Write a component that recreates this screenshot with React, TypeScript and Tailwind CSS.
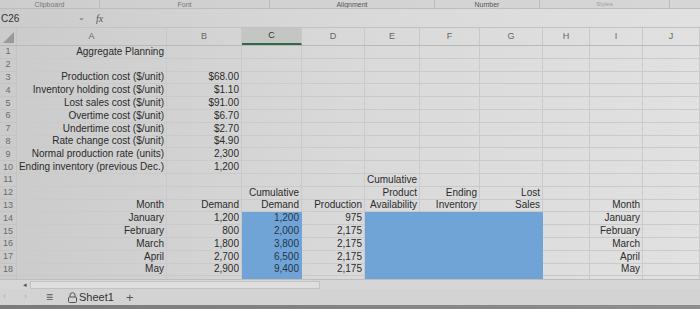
import React from "react";

type Cell = { t?: string; blue?: boolean; align?: "r" | "c" | "l" };

const COLS = "grid-cols-[17px_150px_75px_60px_63px_55px_60px_63px_47px_53px_57px]";

const e: Cell = {};
const r = (t: string): Cell => ({ t, align: "r" });
const b = (t?: string): Cell => ({ t, blue: true, align: "r" });

const rows: Cell[][] = [
  [r("Aggregate Planning"), e, e, e, e, e, e, e, e, e],
  [e, e, e, e, e, e, e, e, e, e],
  [r("Production cost ($/unit)"), r("$68.00"), e, e, e, e, e, e, e, e],
  [r("Inventory holding cost ($/unit)"), r("$1.10"), e, e, e, e, e, e, e, e],
  [r("Lost sales cost ($/unit)"), r("$91.00"), e, e, e, e, e, e, e, e],
  [r("Overtime cost ($/unit)"), r("$6.70"), e, e, e, e, e, e, e, e],
  [r("Undertime cost ($/unit)"), r("$2.70"), e, e, e, e, e, e, e, e],
  [r("Rate change cost ($/unit)"), r("$4.90"), e, e, e, e, e, e, e, e],
  [r("Normal production rate (units)"), r("2,300"), e, e, e, e, e, e, e, e],
  [r("Ending inventory (previous Dec.)"), r("1,200"), e, e, e, e, e, e, e, e],
  [e, e, e, e, r("Cumulative"), e, e, e, e, e],
  [e, e, r("Cumulative"), e, r("Product"), r("Ending"), r("Lost"), e, e, e],
  [r("Month"), r("Demand"), r("Demand"), r("Production"), r("Availability"), r("Inventory"), r("Sales"), e, r("Month"), e],
  [r("January"), r("1,200"), b("1,200"), r("975"), b(), b(), b(), e, r("January"), e],
  [r("February"), r("800"), b("2,000"), r("2,175"), b(), b(), b(), e, r("February"), e],
  [r("March"), r("1,800"), b("3,800"), r("2,175"), b(), b(), b(), e, r("March"), e],
  [r("April"), r("2,700"), b("6,500"), r("2,175"), b(), b(), b(), e, r("April"), e],
  [r("May"), r("2,900"), b("9,400"), r("2,175"), b(), b(), b(), e, r("May"), e],
  [e, e, b(), e, b(), b(), b(), e, e, e],
];

const letters = ["A", "B", "C", "D", "E", "F", "G", "H", "I", "J"];

export default function App() {
  return (
    <div
      className="w-[700px] h-[309px] overflow-hidden flex flex-col bg-gradient-to-r from-[#cbcbcb] via-[#d9d9d9] to-[#e1e1e1] text-[#2b2b2b]"
      style={{ fontFamily: '"Liberation Sans", Arial, sans-serif' }}
    >
      {/* ribbon group labels */}
      <div className="h-[9px] flex items-start text-[7px] text-[#555] leading-none overflow-hidden border-b border-[#bdbdbd] bg-[#cfcfcf]/60">
        <div className="w-[100px] h-full flex items-start justify-center pt-[1px] text-[#777] border-r border-[#bcbcbc]">Clipboard</div>
        <div className="w-[170px] h-full flex items-start justify-center pt-[1px] text-[#777] border-r border-[#bcbcbc]">Font</div>
        <div className="w-[165px] h-full flex items-start justify-center pt-[1px] border-r border-[#bcbcbc]">Alignment</div>
        <div className="w-[105px] h-full flex items-start justify-center pt-[1px] border-r border-[#bcbcbc]">Number</div>
        <div className="w-[130px] h-full flex items-start justify-center pt-[1px] text-[#a0a0a0] text-[6px] border-r border-[#bcbcbc]">Styles</div>
      </div>

      {/* formula bar */}
      <div className="h-[19px] flex items-center border-b border-[#c2c2c2] text-[10px]">
        <div className="w-[78px] pl-[1px] text-[#333]">C26</div>
        <div className="w-[18px] text-[8px] text-[#666] leading-none">⌄</div>
        <div className="w-[20px] text-[#555] italic text-[10px]" style={{ fontFamily: '"Liberation Serif", serif' }}>
          fx
        </div>
        <div className="flex-1 h-full border-l border-[#cfcfcf]" />
      </div>

      {/* column headers */}
      <div className={`grid ${COLS} h-[18px] border-b border-[#b9b9b9] text-[9px] text-[#666]`}>
        <div className="relative border-r border-[#c4c4c4]">
          <svg className="absolute right-[2px] bottom-[2px]" width="11" height="11" viewBox="0 0 11 11">
            <polygon points="11,0 11,11 0,11" fill="#9a9a9a" />
          </svg>
        </div>
        {letters.map((l) => (
          <div
            key={l}
            className={`flex items-center justify-center border-r border-[#c8c8c8] ${
              l === "C" ? "bg-[#c3c6c3] border-b-2 border-b-[#2f6b46] text-[#333]" : ""
            }`}
          >
            {l}
          </div>
        ))}
      </div>

      {/* grid body */}
      <div className="flex-1 overflow-hidden min-h-0">
        {rows.map((row, i) => (
          <div key={i} className={`grid ${COLS} h-[12.8px] text-[10px] leading-none`}>
            <div className="flex items-center justify-center text-[9px] text-[#6a6a6a] border-r border-b border-[#c4c4c4]">
              {i < 18 ? i + 1 : ""}
            </div>
            {row.map((c, j) => (
              <div
                key={j}
                className={`flex items-center justify-end pr-[2px] whitespace-nowrap overflow-visible border-r border-b ${
                  c.blue ? "bg-[#71a4d6] border-[#71a4d6] text-[#22364b]" : "border-[#cacaca]"
                }`}
              >
                {c.t}
              </div>
            ))}
          </div>
        ))}
      </div>

      {/* horizontal scroll bar */}
      <div className="h-[10px] flex items-center border-t border-[#bdbdbd] bg-[#d6d6d6]">
        <div className="w-[30px] flex justify-end pr-[3px] text-[7px] text-[#555] leading-none">◂</div>
        <div className="w-[290px] h-[8px] border border-[#c2c2c2] bg-[#dedede]" />
        <div className="flex-1" />
      </div>

      {/* sheet tabs */}
      <div className="h-[16px] flex items-center text-[11px] text-[#333] bg-[#d3d3d3]">
        <div className="w-[12px] text-[#aaa] text-[9px] pl-[3px]">‹</div>
        <div className="w-[34px] text-[#aaa] text-[9px] pl-[12px]">›</div>
        <div className="w-[22px] text-[#555] text-[12px] leading-none">≡</div>
        <div className="flex items-center gap-[2px] w-[58px]">
          <svg width="9" height="11" viewBox="0 0 9 11">
            <path d="M2 5 V3.2 a2.5 2.5 0 0 1 5 0 V5" fill="none" stroke="#555" strokeWidth="1" />
            <rect x="0.5" y="5" width="8" height="5.5" rx="1" fill="none" stroke="#555" strokeWidth="1" />
          </svg>
          <span>Sheet1</span>
        </div>
        <div className="text-[13px] text-[#555] leading-none">+</div>
      </div>

      {/* bottom edge */}
      <div className="h-[4px] bg-gradient-to-r from-[#7a7a7a] to-[#8e8e8e]" />
    </div>
  );
}
